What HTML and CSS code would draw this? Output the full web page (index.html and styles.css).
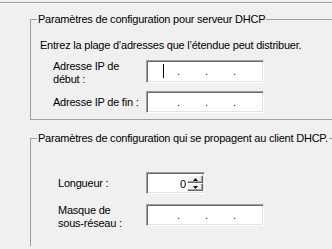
FILE: index.html
```html
<!DOCTYPE html>
<html lang="fr">
<head>
<meta charset="utf-8">
<title>DHCP</title>
<link rel="stylesheet" href="styles.css">
</head>
<body>
<div class="topline"></div>
<fieldset class="group group-server">
  <legend>Paramètres de configuration pour serveur DHCP</legend>
  <p class="hint">Entrez la plage d’adresses que l’étendue peut distribuer.</p>
  <div class="row row-start">
    <label class="lbl">Adresse IP de<br>début :</label>
    <div class="field ip"><span class="caret"></span><span class="dot">.</span><span class="dot">.</span><span class="dot">.</span></div>
  </div>
  <div class="row row-end">
    <label class="lbl lbl-mid">Adresse IP de fin :</label>
    <div class="field ip"><span class="dot">.</span><span class="dot">.</span><span class="dot">.</span></div>
  </div>
</fieldset>
<fieldset class="group group-client">
  <legend>Paramètres de configuration qui se propagent au client DHCP.</legend>
  <div class="row row-len">
    <label class="lbl lbl-mid lbl2">Longueur :</label>
    <div class="field spin">
      <span class="spin-val">0</span>
      <span class="spin-btns">
        <span class="sbtn"><svg width="5" height="3" viewBox="0 0 5 3"><path d="M2.5 0 L5 3 L0 3 Z" fill="#000"/></svg></span>
        <span class="sbtn"><svg width="5" height="3" viewBox="0 0 5 3"><path d="M0 0 L5 0 L2.5 3 Z" fill="#000"/></svg></span>
      </span>
    </div>
  </div>
  <div class="row row-mask">
    <label class="lbl lbl2">Masque de<br>sous-réseau :</label>
    <div class="field ip"><span class="dot">.</span><span class="dot">.</span><span class="dot">.</span></div>
  </div>
</fieldset>
</body>
</html>
```
FILE: styles.css
```css
html, body {
  margin: 0;
  padding: 0;
}
body {
  width: 332px;
  height: 249px;
  overflow: hidden;
  background: #f0f0f0;
  font: 11px/13px "Liberation Sans", Arial, sans-serif;
  letter-spacing: -0.22px;
  color: #000;
}
.topline {
  margin-top: 2px;
  height: 0;
  border-top: 1px solid #a0a0a0;
  border-bottom: 1px solid #ffffff;
}
.group {
  box-sizing: border-box;
  margin: 9px 0 0 30px;
  width: 302px;
  padding: 0;
  border: 1px solid #a0a0a0;
  border-right: none;
  min-width: 0;
}
.group legend {
  margin-left: 6px;
  padding: 0 1px;
  white-space: nowrap;
}
.group-server {
  padding-bottom: 6px;
}
.hint {
  margin: 13px 0 0 9px;
  white-space: nowrap;
}
.row {
  display: flex;
  align-items: flex-start;
}
.row-start { margin-top: 8px; }
.row-end { margin-top: 5px; }
.lbl {
  width: 93px;
  margin-left: 22px;
}
.lbl2 {
  width: 88px;
  margin-left: 27px;
}
.lbl-mid {
  align-self: center;
}
.field {
  position: relative;
  box-sizing: border-box;
  background: #fff;
  border: 1px solid;
  border-color: #a0a0a0 #ffffff #ffffff #a0a0a0;
  box-shadow: inset 1px 1px 0 #696969, inset -1px -1px 0 #e3e3e3;
}
.ip {
  width: 118px;
  height: 23px;
  display: flex;
  align-items: center;
  padding-left: 30px;
}
.row-end .ip, .row-mask .ip {
  height: 22px;
}
.dot {
  width: 28px;
  color: #2a0030;
}
.caret {
  position: absolute;
  left: 16px;
  top: 3px;
  width: 1px;
  height: 14px;
  background: #000;
}
.group-client {
  margin-top: 12px;
  height: 114px;
  border-bottom: none;
}
.row-len {
  margin-top: 27px;
}
.spin {
  width: 59px;
  height: 22px;
  display: flex;
  padding: 2px 1px 2px 2px;
}
.spin-val {
  flex: 1;
  text-align: right;
  padding-right: 1px;
  line-height: 18px;
}
.spin-btns {
  display: flex;
  flex-direction: column;
  width: 16px;
}
.sbtn {
  flex: 1;
  box-sizing: border-box;
  display: flex;
  align-items: center;
  justify-content: center;
  background: #f0f0f0;
  border: 1px solid;
  border-color: #ffffff #696969 #696969 #ffffff;
  box-shadow: inset -1px -1px 0 #a0a0a0;
}
.row-mask {
  margin-top: 10px;
}
```
